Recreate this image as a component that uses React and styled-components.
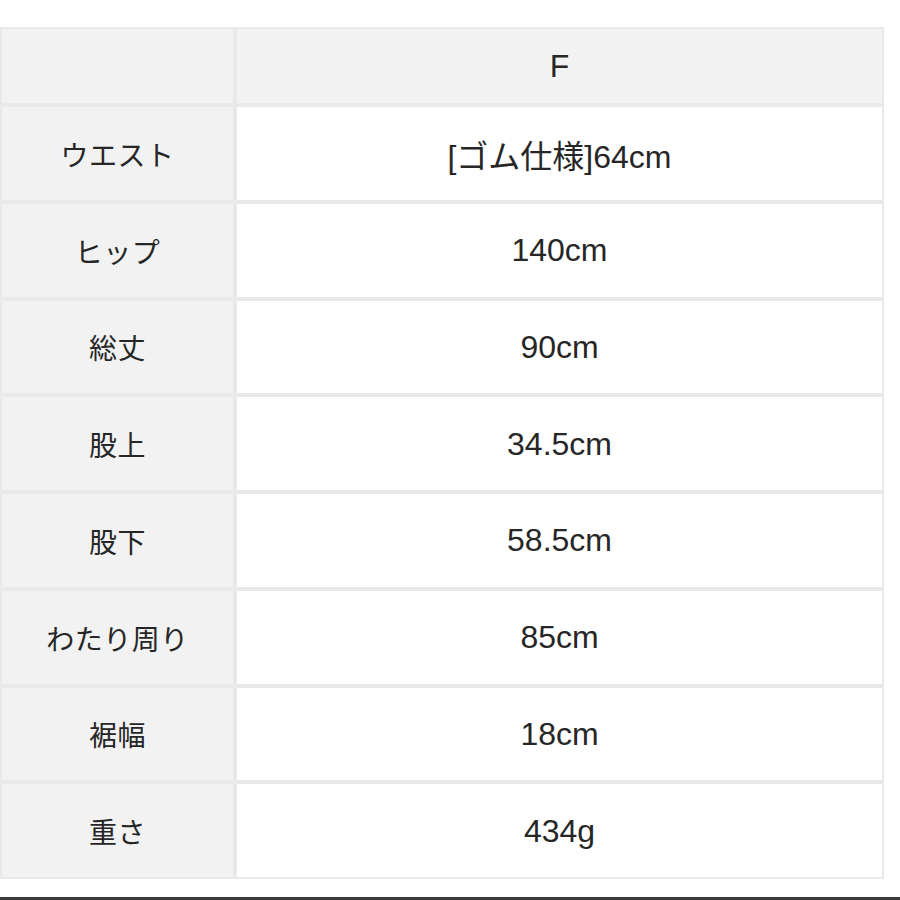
import React from "react";
import styled, { createGlobalStyle } from "styled-components";

const Global = createGlobalStyle`
  html, body { margin: 0; padding: 0; background: #fff; }
  body { font-family: "Liberation Sans", "Noto Sans CJK JP", sans-serif; color: #262626; }
`;

const Page = styled.div`
  width: 900px;
  height: 900px;
  display: flex;
  flex-direction: column;
  padding-top: 27px;
  box-sizing: border-box;
  overflow: hidden;
`;

const Grid = styled.div`
  width: 884px;
  display: grid;
  grid-template-columns: 235px 649px;
  grid-template-rows: 78px repeat(8, 96.75px);
`;

const Cell = styled.div`
  box-sizing: border-box;
  display: flex;
  align-items: center;
  justify-content: center;
  border: 2px solid #e9e9e9;
  background: ${(p) => (p.$shade ? "#f2f2f2" : "#ffffff")};
  font-size: ${(p) => (p.$label ? "28px" : "32px")};
  letter-spacing: ${(p) => (p.$label ? "0.5px" : "0")};
  padding-top: ${(p) => (p.$head ? "0" : "1px")};
`;

const Bottom = styled.div`
  margin-top: auto;
  height: 3px;
  background: #3a3a3a;
`;

const rows = [
  ["ウエスト", "[ゴム仕様]64cm"],
  ["ヒップ", "140cm"],
  ["総丈", "90cm"],
  ["股上", "34.5cm"],
  ["股下", "58.5cm"],
  ["わたり周り", "85cm"],
  ["裾幅", "18cm"],
  ["重さ", "434g"],
];

export default function App() {
  return (
    <>
      <Global />
      <Page>
        <Grid>
          <Cell $shade $label $head />
          <Cell $shade $head>F</Cell>
          {rows.map(([k, v]) => (
            <React.Fragment key={k}>
              <Cell $shade $label>{k}</Cell>
              <Cell>{v}</Cell>
            </React.Fragment>
          ))}
        </Grid>
        <Bottom />
      </Page>
    </>
  );
}
